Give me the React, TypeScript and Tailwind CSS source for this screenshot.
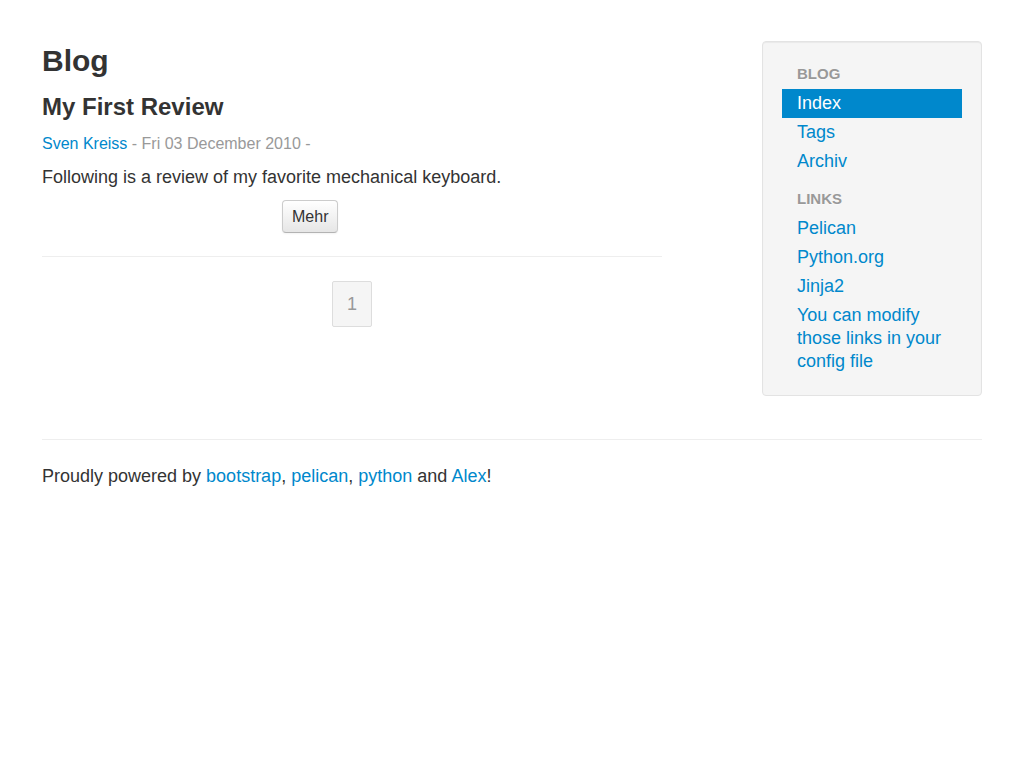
const font = { fontFamily: '"Liberation Sans", Arial, sans-serif' };

const navItems = [
  { label: 'Index', active: true },
  { label: 'Tags' },
  { label: 'Archiv' },
];

const links = ['Pelican', 'Python.org', 'Jinja2', 'You can modify those links in your config file'];

const NavHeader = ({ children }: { children: string }) => (
  <li className="px-[15px] pt-[2px] pb-[4px] text-[15px] leading-[22px] font-bold uppercase text-[#999] [text-shadow:0_1px_0_rgba(255,255,255,0.5)]">
    {children}
  </li>
);

const NavLink = ({ label, active }: { label: string; active?: boolean }) => (
  <li>
    <a
      href="#"
      className={
        active
          ? 'block px-[15px] py-[3px] text-[18px] leading-[23px] bg-[#0088cc] text-white'
          : 'block px-[15px] py-[3px] text-[18px] leading-[23px] text-[#0088cc]'
      }
    >
      {label}
    </a>
  </li>
);

export default function App() {
  return (
    <div className="min-h-screen bg-white text-[#333]" style={font}>
      <div className="w-[940px] mx-auto pt-[41px]">
        <div className="flex gap-[100px] items-start">
          {/* Main column */}
          <div className="w-[620px]">
            <h1 className="text-[30px] leading-[40px] font-bold">Blog</h1>
            <h2 className="mt-[11px] text-[24px] leading-[30px] font-bold">My First Review</h2>
            <p className="mt-[10px] text-[16px] leading-[24px] text-[#999]">
              <a href="#" className="text-[#0088cc]">Sven Kreiss</a> - Fri 03 December 2010 -
            </p>
            <p className="mt-[7px] text-[18px] leading-[28px]">
              Following is a review of my favorite mechanical keyboard.
            </p>
            <div className="mt-[9px] pl-[240px]">
              <button className="h-[33px] px-[9px] text-[16px] text-[#333] rounded-[4px] border border-[#ccc] border-b-[#b3b3b3] bg-linear-to-b from-white to-[#e6e6e6] shadow-[inset_0_1px_0_rgba(255,255,255,0.2),0_1px_2px_rgba(0,0,0,0.05)]">
                Mehr
              </button>
            </div>
            <hr className="mt-[23px] border-0 border-t border-[#eee]" />
            <div className="mt-[24px] flex justify-center">
              <span className="w-[40px] h-[46px] flex items-center justify-center border border-[#ddd] bg-[#f5f5f5] text-[#999] text-[18px] rounded-[2px]">
                1
              </span>
            </div>
          </div>

          {/* Sidebar */}
          <div className="w-[220px] bg-[#f5f5f5] border border-[#e3e3e3] rounded-[4px] p-[19px] shadow-[inset_0_1px_1px_rgba(0,0,0,0.05)]">
            <ul>
              <NavHeader>Blog</NavHeader>
              {navItems.map((item) => (
                <NavLink key={item.label} label={item.label} active={item.active} />
              ))}
              <li className="h-[10px]" />
              <NavHeader>Links</NavHeader>
              {links.map((l) => (
                <NavLink key={l} label={l} />
              ))}
            </ul>
          </div>
        </div>

        <hr className="mt-[43px] border-0 border-t border-[#eee]" />
        <footer className="mt-[22px] text-[18px] leading-[28px]">
          Proudly powered by <a href="#" className="text-[#0088cc]">bootstrap</a>,{' '}
          <a href="#" className="text-[#0088cc]">pelican</a>,{' '}
          <a href="#" className="text-[#0088cc]">python</a> and{' '}
          <a href="#" className="text-[#0088cc]">Alex</a>!
        </footer>
      </div>
    </div>
  );
}
